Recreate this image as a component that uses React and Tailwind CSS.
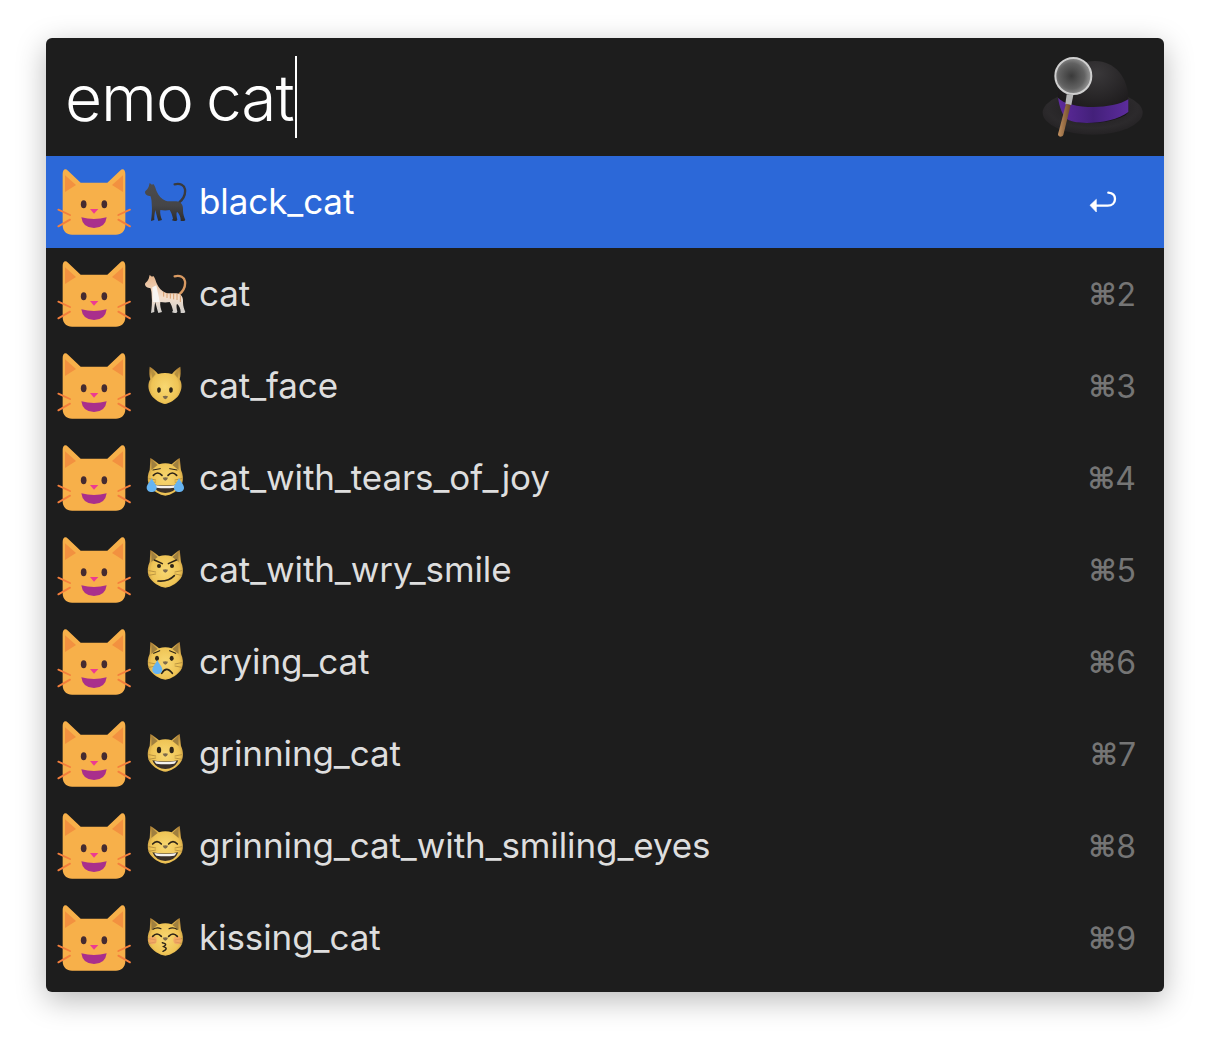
import React from 'react';

const rows = [
    { name: 'black_cat', emoji: 'black', key: null },
    { name: 'cat', emoji: 'tabby', key: '2' },
    { name: 'cat_face', emoji: 'face', key: '3' },
    { name: 'cat_with_tears_of_joy', emoji: 'tears', key: '4' },
    { name: 'cat_with_wry_smile', emoji: 'wry', key: '5' },
    { name: 'crying_cat', emoji: 'crying', key: '6' },
    { name: 'grinning_cat', emoji: 'grin', key: '7' },
    { name: 'grinning_cat_with_smiling_eyes', emoji: 'smile', key: '8' },
    { name: 'kissing_cat', emoji: 'kiss', key: '9' },
];

// workflow icon, the big orange cat head
const CatHead = () => (
    <svg width="76" height="68" viewBox="48 54 228 204" className="shrink-0">
        <path d="M68 72 C68 58 76 54 84 62 L122 98 L202 98 L240 62 C248 54 256 58 256 72 L256 226 C256 244 244 254 228 254 L96 254 C80 254 68 244 68 226 Z" fill="#f7b04a" />
        <path d="M75 126 L75 76 L108 105 Z" fill="#f29140" />
        <path d="M249 126 L249 76 L216 105 Z" fill="#f29140" />
        <ellipse cx="131" cy="163" rx="8.5" ry="12" fill="#452b30" />
        <ellipse cx="193" cy="163" rx="8.5" ry="12" fill="#452b30" />
        <path d="M150 177 L175 177 L162 191 Z" fill="#ec3a92" />
        <path d="M124 202 Q162 212 200 202 Q196 234 162 234 Q128 234 124 202 Z" fill="#a92f8c" />
        <g stroke="#f47f3c" strokeWidth="5.5" strokeLinecap="round">
            <path d="M55 179 L90 195" />
            <path d="M55 229 L90 209" />
            <path d="M270 179 L235 195" />
            <path d="M270 229 L235 209" />
        </g>
    </svg>
);

const catBody = 'M17 20 L20 9 L27 14 L31 12 C37 18 38 28 42 36 C47 48 56 58 68 62 C82 66 98 62 108 66 C118 70 121 80 120 92 C120 102 124 112 127 120 C127 123 121 123 113 123 L113 119 C113 110 108 100 102 95 C99 100 101 110 103 119 L100 123 C94 123 88 122 87 120 L90 116 C88 106 84 96 80 90 C72 92 62 92 52 90 C50 100 54 112 57 120 L46 123 C42 110 39 100 37 90 C35 100 33 112 34 120 L24 123 C26 110 28 90 26 70 C26 60 24 52 22 48 C14 48 6 44 6 36 C7 30 13 30 17 20 Z';

const StandingCat = ({ tabby }) => (
    <svg width="44" height="44" viewBox="0 0 132 132" className="shrink-0">
        <defs>
            <linearGradient id="blackCat" x1="0" y1="0" x2="0" y2="1">
                <stop offset="0" stopColor="#4c4c4e" />
                <stop offset="0.6" stopColor="#454547" />
                <stop offset="1" stopColor="#2c2c2e" />
            </linearGradient>
            <linearGradient id="tabbyCat" x1="0" y1="0" x2="0" y2="1">
                <stop offset="0" stopColor="#e6b48a" />
                <stop offset="0.6" stopColor="#f3dfcd" />
                <stop offset="1" stopColor="#cfcdca" />
            </linearGradient>
        </defs>
        <path d="M108 68 C120 58 128 44 126 28 C124 16 112 9 95 13" fill="none" stroke={tabby ? '#d99a62' : '#3a3a3c'} strokeWidth="7" strokeLinecap="round" />
        <path d={catBody} fill={`url(#${tabby ? 'tabbyCat' : 'blackCat'})`} />
        {tabby && (
            <g stroke="#cf8a50" strokeWidth="3" opacity="0.75">
                <path d="M62 60 L62 74" />
                <path d="M72 63 L72 78" />
                <path d="M82 64 L82 80" />
                <path d="M92 64 L92 82" />
                <path d="M102 65 L102 84" />
                <path d="M112 70 L112 90" />
            </g>
        )}
        {tabby && <path d="M28 46 C28 60 30 80 30 90 L50 90 C48 76 44 60 40 40 Z" fill="#f7f5f2" />}
    </svg>
);

const catFace = 'M22 6 C30 10 42 20 48 25 C60 21 74 21 86 25 C92 20 102 10 110 6 C112 20 113 35 114 42 C120 55 122 70 117 84 C108 104 82 118 67 119 C52 118 26 104 17 84 C12 70 14 55 20 42 C21 35 21 20 22 6 Z';

const Whiskers = () => (
    <g stroke="#b08a3c" strokeWidth="2.5" strokeLinecap="round">
        <path d="M18 68 L38 72" />
        <path d="M18 82 L38 78" />
        <path d="M116 68 L96 72" />
        <path d="M116 82 L96 78" />
    </g>
);

const Nose = ({ y = 69 }) => <path d={`M59 ${y - 4} Q67 ${y - 7} 75 ${y - 4} Q73 ${y + 3} 67 ${y + 5} Q61 ${y + 3} 59 ${y - 4} Z`} fill="#7d6a4c" />;

const OpenMouth = () => (
    <g>
        <path d="M28 85 Q67 92 106 85 Q96 110 67 111 Q38 110 28 85 Z" fill="#3a3028" />
        <path d="M34 87 Q67 93 100 87 Q97 93 94 95 Q67 99 40 95 Q36 92 34 87 Z" fill="#f4f2ee" />
    </g>
);

const ArcEye = ({ x, y = 58 }) => <path d={`M${x - 13} ${y} Q${x} ${y - 14} ${x + 13} ${y}`} fill="none" stroke="#2d2418" strokeWidth="5" strokeLinecap="round" />;

const Tear = ({ x, y, s = 1 }) => (
    <path d={`M${x} ${y} C${x + 5 * s} ${y + 12 * s} ${x + 15 * s} ${y + 20 * s} ${x + 15 * s} ${y + 29 * s} C${x + 15 * s} ${y + 37 * s} ${x + 8 * s} ${y + 42 * s} ${x} ${y + 42 * s} C${x - 8 * s} ${y + 42 * s} ${x - 15 * s} ${y + 37 * s} ${x - 15 * s} ${y + 29 * s} C${x - 15 * s} ${y + 20 * s} ${x - 5 * s} ${y + 12 * s} ${x} ${y} Z`} fill="#66b4f2" />
);

const FaceCat = ({ kind }) => (
    <svg width="44" height="44" viewBox="0 0 132 132" className="shrink-0">
        <defs>
            <radialGradient id={`catYellow${kind}`} cx="0.5" cy="0.55" r="0.62">
                <stop offset="0" stopColor="#f8d872" />
                <stop offset="0.65" stopColor="#efc455" />
                <stop offset="1" stopColor="#b4873a" />
            </radialGradient>
        </defs>
        {kind === 'face' ? (
            <g>
                <path d="M20 8 C28 12 38 20 45 30 C58 26 74 26 87 30 C94 20 104 12 112 8 C114 24 113 36 110 46 C118 58 118 76 108 92 C98 108 78 118 66 120 C54 118 34 108 24 92 C14 76 14 58 22 46 C19 36 18 24 20 8 Z" fill="url(#catYellowface)" />
                <path d="M24 14 L38 30 L28 42 Z" fill="#b8923f" />
                <path d="M108 14 L94 30 L104 42 Z" fill="#b8923f" />
                <ellipse cx="48" cy="78" rx="5.5" ry="8.5" fill="#2d2418" />
                <ellipse cx="84" cy="78" rx="5.5" ry="8.5" fill="#2d2418" />
                <Nose y={101} />
            </g>
        ) : (
            <g>
                <path d={catFace} fill={`url(#catYellow${kind})`} />
                <path d="M26 12 L44 27 L25 42 Z" fill="#a0803f" />
                <path d="M106 12 L88 27 L107 42 Z" fill="#a0803f" />
                <Whiskers />
            </g>
        )}
        {kind === 'tears' && (
            <g>
                <ArcEye x={44} />
                <ArcEye x={88} />
                <path d="M30 42 L52 38" stroke="#2d2418" strokeWidth="3" strokeLinecap="round" />
                <path d="M102 42 L80 38" stroke="#2d2418" strokeWidth="3" strokeLinecap="round" />
                <OpenMouth />
                <Nose />
                <Tear x={26} y={66} s={1} />
                <Tear x={108} y={66} s={1} />
            </g>
        )}
        {kind === 'wry' && (
            <g>
                <ellipse cx="48" cy="54" rx="6" ry="6" fill="#2d2418" />
                <ellipse cx="87" cy="54" rx="6" ry="6" fill="#2d2418" />
                <path d="M34 36 L58 47" stroke="#2d2418" strokeWidth="4.5" strokeLinecap="round" />
                <path d="M100 36 L76 47" stroke="#2d2418" strokeWidth="4.5" strokeLinecap="round" />
                <Nose />
                <path d="M45 99 Q76 102 94 83" fill="none" stroke="#2d2418" strokeWidth="5" strokeLinecap="round" />
            </g>
        )}
        {kind === 'crying' && (
            <g>
                <ellipse cx="42" cy="55" rx="6" ry="8" fill="#2d2418" />
                <ellipse cx="86" cy="55" rx="6" ry="8" fill="#2d2418" />
                <path d="M32 40 L50 32" stroke="#2d2418" strokeWidth="3.5" strokeLinecap="round" />
                <path d="M98 40 L80 32" stroke="#2d2418" strokeWidth="3.5" strokeLinecap="round" />
                <Nose />
                <path d="M56 100 Q70 76 88 100" fill="none" stroke="#2d2418" strokeWidth="5" strokeLinecap="round" />
                <Tear x={43} y={60} s={1} />
            </g>
        )}
        {kind === 'grin' && (
            <g>
                <ellipse cx="48" cy="54" rx="6.5" ry="10" fill="#2d2418" />
                <ellipse cx="86" cy="54" rx="6.5" ry="10" fill="#2d2418" />
                <OpenMouth />
                <Nose />
            </g>
        )}
        {kind === 'smile' && (
            <g>
                <ArcEye x={42} y={60} />
                <ArcEye x={90} y={60} />
                <OpenMouth />
                <Nose />
            </g>
        )}
        {kind === 'kiss' && (
            <g>
                <circle cx="29" cy="73" r="12" fill="#f29a6a" opacity="0.65" />
                <circle cx="103" cy="73" r="12" fill="#f29a6a" opacity="0.65" />
                <path d="M30 40 Q42 32 54 38" fill="none" stroke="#2d2418" strokeWidth="3.5" strokeLinecap="round" />
                <path d="M102 40 Q90 32 78 38" fill="none" stroke="#2d2418" strokeWidth="3.5" strokeLinecap="round" />
                <ArcEye x={42} y={61} />
                <ArcEye x={90} y={61} />
                <Nose />
                <path d="M58 80 Q76 84 62 92 Q78 98 60 106" fill="none" stroke="#2d2418" strokeWidth="4.5" strokeLinecap="round" />
            </g>
        )}
    </svg>
);

const Emoji = ({ kind }) => {
    if (kind === 'black') return <StandingCat />;
    if (kind === 'tabby') return <StandingCat tabby />;
    return <FaceCat kind={kind} />;
};

// Alfred hat with the magnifier over it
const HatLogo = () => (
    <svg width="110" height="85" viewBox="30 72 330 255" className="shrink-0">
        <defs>
            <radialGradient id="hatBrim" cx="0.5" cy="0.4" r="0.6">
                <stop offset="0" stopColor="#1c1a1c" />
                <stop offset="0.75" stopColor="#2c2a2c" />
                <stop offset="1" stopColor="#242224" />
            </radialGradient>
            <radialGradient id="hatDome" cx="0.55" cy="0.2" r="0.75">
                <stop offset="0" stopColor="#3a383a" />
                <stop offset="1" stopColor="#171516" />
            </radialGradient>
            <linearGradient id="hatBand" x1="0" y1="0" x2="1" y2="0">
                <stop offset="0" stopColor="#5e2a9c" />
                <stop offset="0.5" stopColor="#43207a" />
                <stop offset="1" stopColor="#5c2c9c" />
            </linearGradient>
            <radialGradient id="lens" cx="0.45" cy="0.5" r="0.55">
                <stop offset="0" stopColor="#3a3a3a" />
                <stop offset="0.65" stopColor="#626262" />
                <stop offset="1" stopColor="#9a9a9a" />
            </radialGradient>
            <linearGradient id="handle" x1="0" y1="0" x2="1" y2="0">
                <stop offset="0" stopColor="#c09060" />
                <stop offset="1" stopColor="#6e4a28" />
            </linearGradient>
        </defs>
        <ellipse cx="188" cy="245" rx="150" ry="66" fill="url(#hatBrim)" />
        <path d="M84 200 C84 140 130 90 195 90 C255 90 295 140 295 205 L295 245 C260 280 130 285 110 262 Z" fill="url(#hatDome)" />
        <path d="M84 200 C110 232 240 240 295 205 L295 243 C250 280 130 285 108 262 C96 250 88 225 84 200 Z" fill="url(#hatBand)" />
        <path d="M110 190 L130 192 L124 222 L106 220 Z" fill="#b5b5b5" />
        <path d="M108 218 L122 222 L100 312 C96 320 84 318 84 310 Z" fill="url(#handle)" />
        <circle cx="130" cy="135" r="54" fill="url(#lens)" stroke="#cfcfcf" strokeWidth="6" />
    </svg>
);

const ReturnIcon = () => (
    <svg width="30" height="24" viewBox="60 62 90 72" className="shrink-0 mr-[17px]">
        <path d="M63 108 L82 90 L82 128 Z" fill="#ffffff" strokeLinejoin="round" stroke="#ffffff" strokeWidth="2" />
        <path d="M80 109 L116 109 C130 109 138 100 138 89 C138 78 130 71 118 70" fill="none" stroke="#ffffff" strokeWidth="7" strokeLinecap="round" />
    </svg>
);

const App = () => {
    return (
        <div className="min-h-[1046px] bg-white pt-[38px] pl-[46px] font-['Inter',sans-serif]">
            <div className="w-[1118px] h-[954px] bg-[#1d1d1d] rounded-md overflow-hidden shadow-[0_8px_30px_rgba(0,0,0,0.28)]">
                <div className="h-[118px] flex items-center justify-between pl-[19px] pr-[14px]">
                    <div className="flex items-center">
                        <span className="text-white text-[64px] leading-none font-light tracking-[-1px] [word-spacing:-4px] mt-[2px]">emo cat</span>
                        <div className="w-[2px] h-[82px] bg-white ml-[1px]"></div>
                    </div>
                    <HatLogo />
                </div>
                {rows.map((row, i) => (
                    <div key={row.name} className={`h-[92px] flex items-center pl-[10px] pr-[28px] ${i === 0 ? 'bg-[#2c68d8]' : ''}`}>
                        <CatHead />
                        <div className="ml-[11px]">
                            <Emoji kind={row.emoji} />
                        </div>
                        <span className={`ml-[12px] flex-1 text-[35px] leading-none tracking-[-0.1px] -mt-[2px] ${i === 0 ? 'text-white' : 'text-[#dedede]'}`}>{row.name}</span>
                        {row.key ? (
                            <span className="text-[#757575] text-[32px] leading-none flex items-center mt-[2px]">
                                <span className="font-['DejaVu_Sans',sans-serif] text-[30px] font-bold leading-none">⌘</span>{row.key}
                            </span>
                        ) : (
                            <ReturnIcon />
                        )}
                    </div>
                ))}
            </div>
        </div>
    );
};

export default App;
